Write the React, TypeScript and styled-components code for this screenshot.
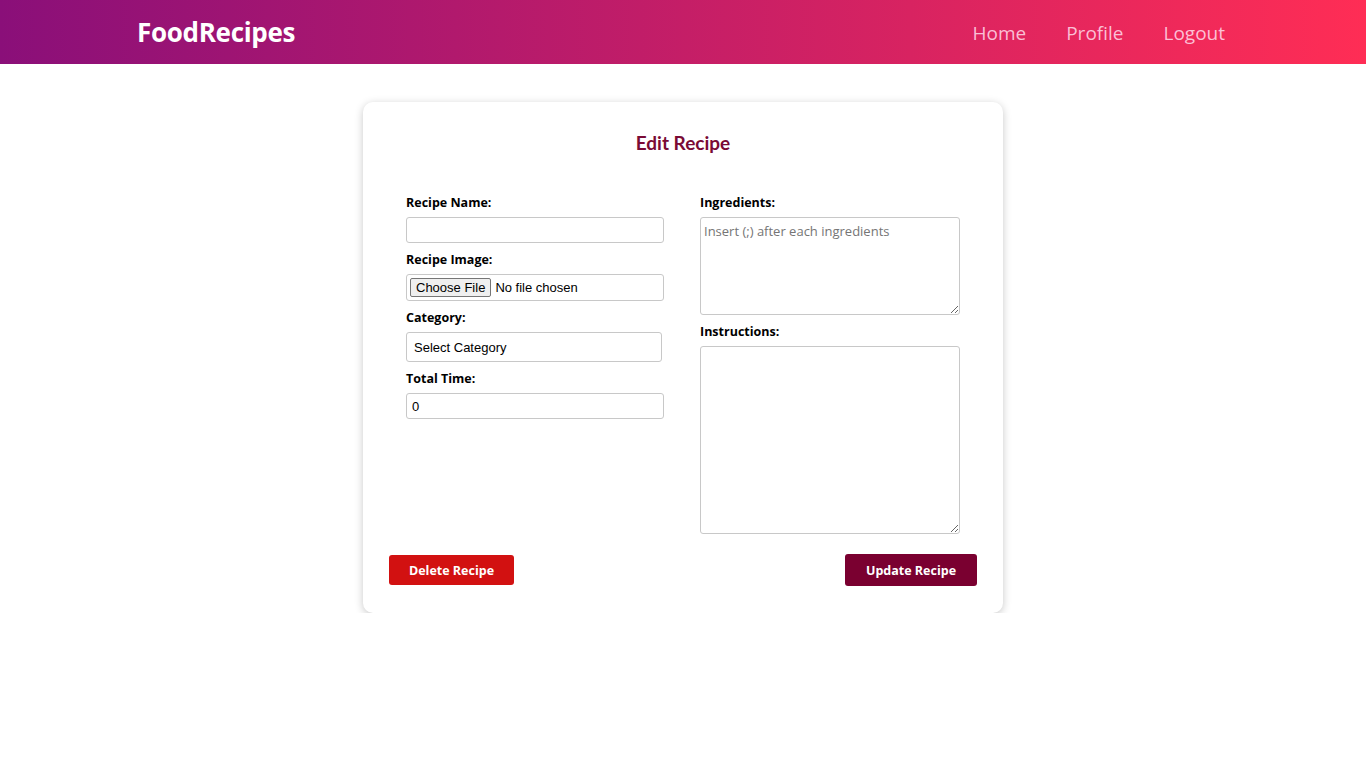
import React from "react";
import styled, { createGlobalStyle } from "styled-components";

const Global = createGlobalStyle`
  html, body { margin: 0; padding: 0; background: #fff; }
  body { font-family: "Open Sans", sans-serif; }
  * { box-sizing: border-box; }
`;

const Header = styled.header`
  height: 64px;
  background: linear-gradient(to right, #8a0f79, #ff2d55);
  display: flex;
  align-items: center;
  justify-content: space-between;
  padding: 0 141px 0 137px;
`;

const Logo = styled.h1`
  margin: 0;
  font-family: "Open Sans", sans-serif;
  font-weight: 700;
  font-size: 26px;
  color: #fff;
  letter-spacing: -0.3px;
`;

const Nav = styled.nav`
  display: flex;
  gap: 40px;
  padding-top: 2px;
`;

const NavLink = styled.a`
  font-family: "Open Sans", sans-serif;
  font-size: 19px;
  color: rgba(255, 220, 235, 0.85);
  text-decoration: none;
  cursor: pointer;
`;

const Main = styled.main`
  display: flex;
  justify-content: center;
  padding-top: 38px;
`;

const Card = styled.div`
  width: 640px;
  background: #fff;
  border-radius: 10px;
  box-shadow: 0 2px 8px rgba(0, 0, 0, 0.22);
  padding: 29px 26px 27px;
`;

const Title = styled.h2`
  margin: 0;
  text-align: center;
  font-family: Lato, sans-serif;
  font-weight: 700;
  font-size: 19px;
  color: #7a0a35;
  line-height: 24px;
`;

const FormGrid = styled.div`
  display: grid;
  grid-template-columns: 258px 260px;
  column-gap: 36px;
  padding: 0 17px;
  margin-top: 39px;
`;

const Column = styled.div`
  display: flex;
  flex-direction: column;
`;

const Label = styled.label`
  font-family: "Open Sans", sans-serif;
  font-weight: 700;
  font-size: 12.5px;
  color: #000;
  line-height: 18px;
  margin-bottom: 5px;
`;

const Field = styled.div<{ $gap?: number }>`
  display: flex;
  flex-direction: column;
  margin-bottom: ${(p) => p.$gap ?? 8}px;
`;

const TextInput = styled.input`
  width: 100%;
  height: 26px;
  border: 1px solid #c8c8c8;
  border-radius: 3px;
  padding: 0 5px;
  font-family: "Liberation Sans", Arial, sans-serif;
  font-size: 13px;
  color: #000;
  outline: none;
`;

const FileBox = styled.div`
  width: 100%;
  height: 27px;
  border: 1px solid #c8c8c8;
  border-radius: 3px;
  display: flex;
  align-items: center;
  padding: 0 3px;
  gap: 4px;
  font-family: "Liberation Sans", Arial, sans-serif;
  font-size: 13px;
  color: #000;
`;

const FileButton = styled.span`
  display: inline-flex;
  align-items: center;
  height: 19px;
  padding: 0 5px;
  border: 1px solid #767676;
  border-radius: 2px;
  background: #efefef;
  font-size: 13px;
`;

const Select = styled.div`
  width: 256px;
  height: 30px;
  border: 1px solid #c8c8c8;
  border-radius: 3px;
  display: flex;
  align-items: center;
  padding: 0 7px;
  font-family: "Liberation Sans", Arial, sans-serif;
  font-size: 13px;
  color: #000;
`;

const TextArea = styled.textarea<{ $h: number }>`
  width: 100%;
  height: ${(p) => p.$h}px;
  border: 1px solid #c8c8c8;
  border-radius: 3px;
  padding: 4px 3px;
  font-family: "Open Sans", sans-serif;
  font-size: 13px;
  resize: vertical;
  outline: none;
  &::placeholder { color: #757575; }
`;

const Actions = styled.div`
  display: flex;
  justify-content: space-between;
  align-items: center;
  margin-top: 20px;
`;

const Button = styled.button<{ $bg: string; $w: number; $h: number }>`
  width: ${(p) => p.$w}px;
  height: ${(p) => p.$h}px;
  background: ${(p) => p.$bg};
  color: #fff;
  border: none;
  border-radius: 3px;
  font-family: "Open Sans", sans-serif;
  font-weight: 700;
  font-size: 12.5px;
  cursor: pointer;
`;

export default function App() {
  return (
    <>
      <Global />
      <Header>
        <Logo>FoodRecipes</Logo>
        <Nav>
          <NavLink>Home</NavLink>
          <NavLink>Profile</NavLink>
          <NavLink>Logout</NavLink>
        </Nav>
      </Header>
      <Main>
        <Card>
          <Title>Edit Recipe</Title>
          <FormGrid>
            <Column>
              <Field>
                <Label>Recipe Name:</Label>
                <TextInput />
              </Field>
              <Field>
                <Label>Recipe Image:</Label>
                <FileBox>
                  <FileButton>Choose File</FileButton>
                  <span>No file chosen</span>
                </FileBox>
              </Field>
              <Field>
                <Label>Category:</Label>
                <Select>Select Category</Select>
              </Field>
              <Field>
                <Label>Total Time:</Label>
                <TextInput defaultValue="0" />
              </Field>
            </Column>
            <Column>
              <Field>
                <Label>Ingredients:</Label>
                <TextArea $h={98} placeholder="Insert (;) after each ingredients" />
              </Field>
              <Field $gap={0}>
                <Label>Instructions:</Label>
                <TextArea $h={188} />
              </Field>
            </Column>
          </FormGrid>
          <Actions>
            <Button $bg="#d21111" $w={125} $h={30}>Delete Recipe</Button>
            <Button $bg="#7a0030" $w={132} $h={32}>Update Recipe</Button>
          </Actions>
        </Card>
      </Main>
    </>
  );
}
